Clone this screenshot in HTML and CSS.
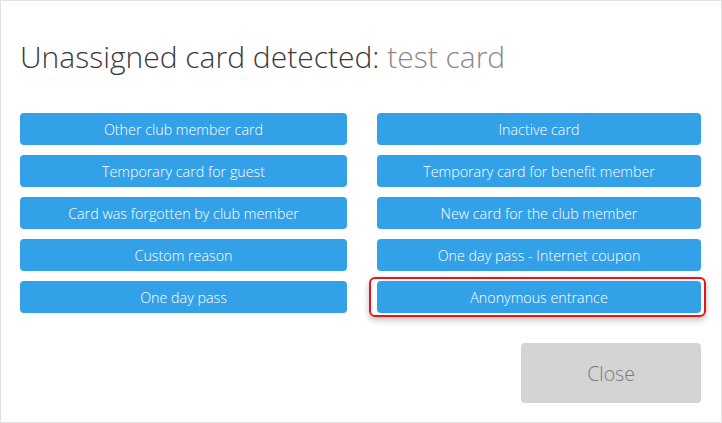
FILE: index.html
```html
<!DOCTYPE html>
<html>
<head>
<meta charset="utf-8">
<link rel="stylesheet" href="styles.css">
</head>
<body>
<div class="dialog">
  <h1 class="title">Unassigned card detected: <span class="name">test card</span></h1>
  <div class="grid">
    <button class="btn">Other club member card</button>
    <button class="btn">Inactive card</button>
    <button class="btn">Temporary card for guest</button>
    <button class="btn">Temporary card for benefit member</button>
    <button class="btn">Card was forgotten by club member</button>
    <button class="btn">New card for the club member</button>
    <button class="btn">Custom reason</button>
    <button class="btn">One day pass - Internet coupon</button>
    <button class="btn">One day pass</button>
    <button class="btn highlighted">Anonymous entrance</button>
  </div>
  <div class="footer">
    <button class="close">Close</button>
  </div>
</div>
</body>
</html>
```
FILE: styles.css
```css
html, body {
  margin: 0;
  padding: 0;
  background: #fff;
}
.dialog {
  box-sizing: border-box;
  width: 722px;
  height: 423px;
  border: 1px solid #e2e2e2;
  padding: 0 20px 0 19px;
  font-family: "Open Sans", "DejaVu Sans", sans-serif;
}
.title {
  margin: 0;
  padding-top: 34px;
  font-size: 30px;
  line-height: 44px;
  font-weight: 300;
  color: #3a3a3a;
  height: 78px;
  box-sizing: border-box;
  white-space: nowrap;
}
.name {
  color: #8a8a8a;
}
.grid {
  margin-top: 34px;
  display: grid;
  grid-template-columns: 327px 324px;
  column-gap: 30px;
  row-gap: 10px;
}
.btn {
  position: relative;
  height: 32px;
  border: 0;
  border-radius: 4px;
  background: #33a1e8;
  color: #fff;
  font-family: "Open Sans", "DejaVu Sans", sans-serif;
  font-size: 14.3px;
  font-weight: 300;
  padding: 0;
}
.highlighted::after {
  content: "";
  position: absolute;
  left: -8px;
  right: -5px;
  top: -4px;
  bottom: -4px;
  border: 2px solid #e8141a;
  border-radius: 6px;
  box-shadow: 0 3px 6px rgba(0,0,0,0.25);
  background: transparent;
  z-index: -1;
}
.highlighted {
  z-index: 1;
}
.footer {
  display: flex;
  justify-content: flex-end;
  margin-top: 30px;
}
.close {
  width: 180px;
  height: 60px;
  border: 0;
  border-radius: 4px;
  background: #d4d4d4;
  color: #7a7a7a;
  font-family: "Open Sans", "DejaVu Sans", sans-serif;
  font-size: 19.5px;
  font-weight: 300;
}
```
